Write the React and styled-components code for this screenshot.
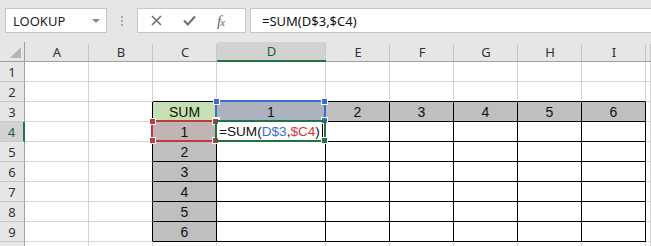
import React from "react";
import styled, { createGlobalStyle } from "styled-components";

const GlobalStyle = createGlobalStyle`
  html, body { margin: 0; padding: 0; background: #ffffff; overflow: hidden; }
  body { font-family: "Liberation Sans", Arial, sans-serif; }
`;

const Page = styled.div`
  width: 651px;
  height: 246px;
  display: flex;
  flex-direction: column;
  background: #ffffff;
  overflow: hidden;
`;

/* ---------- formula bar ---------- */

const Toolbar = styled.div`
  height: 42px;
  flex: none;
  background: #e6e6e6;
  display: flex;
  align-items: flex-start;
  padding: 8px 0 0 5px;
  box-sizing: border-box;
`;

const NameBox = styled.div`
  width: 102px;
  height: 25px;
  box-sizing: border-box;
  background: #ffffff;
  border: 1px solid #c6c6c6;
  display: flex;
  align-items: center;
  justify-content: space-between;
  padding: 0 6px 0 7px;
  font-family: "Noto Sans", "Open Sans", sans-serif;
  font-size: 13px;
  color: #222;
`;

const Caret = styled.span`
  width: 0;
  height: 0;
  border-left: 4px solid transparent;
  border-right: 4px solid transparent;
  border-top: 4px solid #888;
  margin-top: 1px;
`;

const Grip = styled.div`
  width: 30px;
  height: 25px;
  display: flex;
  flex-direction: column;
  align-items: center;
  justify-content: center;
  gap: 2px;
  span {
    width: 2px;
    height: 2px;
    background: #a8a8a8;
  }
`;

const FuncBox = styled.div`
  width: 109px;
  height: 25px;
  box-sizing: border-box;
  background: #ffffff;
  border: 1px solid #c6c6c6;
  display: flex;
  align-items: center;
  padding-left: 13px;
  gap: 21px;
`;

const Fx = styled.span`
  display: flex;
  align-items: baseline;
  font-family: "Liberation Serif", serif;
  font-style: italic;
  font-size: 15px;
  line-height: 1;
  color: #666;
  margin-top: 2px;
  small {
    font-size: 11px;
    margin-left: -1px;
  }
`;

const FormulaInput = styled.div`
  flex: 1;
  height: 25px;
  margin-left: 4px;
  box-sizing: border-box;
  background: #ffffff;
  border: 1px solid #c6c6c6;
  border-right: none;
  display: flex;
  align-items: center;
  padding-left: 11px;
  font-family: "Noto Sans", "Open Sans", sans-serif;
  font-size: 13px;
  color: #111;
`;

/* ---------- sheet ---------- */

const Sheet = styled.div`
  display: grid;
  grid-template-columns: 25px 64px 64px 64px 109px 64px 64px 64px 64px 64px 1fr;
  grid-auto-rows: 20px;
  flex: 1;
`;

const Header = styled.div`
  position: relative;
  background: ${(p) => (p.$active ? "#d2d2d2" : "#e6e6e6")};
  display: flex;
  align-items: center;
  justify-content: center;
  font-family: "Noto Sans", "Open Sans", sans-serif;
  font-size: 13px;
  color: ${(p) => (p.$active ? "#1e5c3a" : "#333")};
  box-sizing: border-box;
  border-bottom: ${(p) => (p.$active ? "2px solid #217346" : "1px solid #a0a0a0")};
  &::after {
    content: "";
    position: absolute;
    right: 0;
    top: 2px;
    bottom: 0;
    width: 1px;
    background: #c8c8c8;
  }
`;

const RowHead = styled.div`
  background: ${(p) => (p.$active ? "#d2d2d2" : "#e6e6e6")};
  display: flex;
  align-items: center;
  justify-content: center;
  font-family: "Noto Sans", "Open Sans", sans-serif;
  font-size: 13px;
  color: ${(p) => (p.$active ? "#1e5c3a" : "#333")};
  box-sizing: border-box;
  border-right: ${(p) => (p.$active ? "2px solid #217346" : "1px solid #a0a0a0")};
  border-bottom: 1px solid #c8c8c8;
`;

const Corner = styled.div`
  background: #e6e6e6;
  border-right: 1px solid #a0a0a0;
  border-bottom: 1px solid #a0a0a0;
  box-sizing: border-box;
  display: flex;
  align-items: flex-end;
  justify-content: flex-end;
  padding: 0 3px 3px 0;
`;

const Cell = styled.div`
  position: relative;
  box-sizing: border-box;
  background: ${(p) => p.$bg || "#ffffff"};
  border-right: 1px solid ${(p) => p.$rc || "#d4d4d4"};
  border-bottom: 1px solid ${(p) => p.$bc || "#d4d4d4"};
  display: flex;
  align-items: center;
  justify-content: ${(p) => (p.$left ? "flex-start" : "center")};
  padding-left: ${(p) => (p.$left ? "2px" : "0")};
  font-family: "Liberation Sans", Arial, sans-serif;
  font-size: ${(p) => (p.$left ? "13.6px" : "14px")};
  color: #111;
  white-space: nowrap;
`;

const RangeMark = styled.div`
  position: absolute;
  left: -2px;
  top: -2px;
  right: -1px;
  bottom: -1px;
  border: 2px solid ${(p) => p.$color};
  pointer-events: none;
  z-index: 2;
`;

const Handle = styled.span`
  position: absolute;
  width: 5px;
  height: 5px;
  background: ${(p) => p.$color};
  border: 1px solid #ffffff;
  ${(p) => (p.$top ? "top: -4px;" : "bottom: -4px;")}
  ${(p) => (p.$l ? "left: -4px;" : "right: -4px;")}
`;

const Blue = styled.span`
  color: #3c6fd0;
`;
const Red = styled.span`
  color: #d03a3a;
`;
const TextCaret = styled.span`
  display: inline-block;
  width: 1px;
  height: 15px;
  background: #000;
  margin-left: 2px;
`;

const cols = ["A", "B", "C", "D", "E", "F", "G", "H", "I", ""];

const Mark = ({ color, corners }) => (
  <RangeMark $color={color}>
    {corners.map(([t, l]) => (
      <Handle key={`${t}${l}`} $color={color} $top={t} $l={l} />
    ))}
  </RangeMark>
);

const allCorners = [
  [true, true],
  [true, false],
  [false, true],
  [false, false],
];

const cellValue = (r, c) => {
  if (r === 3 && c === 2) return "SUM";
  if (r === 3 && c >= 3 && c <= 8) return String(c - 2);
  if (c === 2 && r >= 4 && r <= 9) return String(r - 3);
  return "";
};

const cellStyle = (r, c) => {
  const inTable = r >= 3 && r <= 9 && c >= 2 && c <= 8;
  let bg;
  if (r === 3 && c === 2) bg = "#c6e0b4";
  else if (r === 3 && c === 3) bg = "#acb3bf";
  else if (r === 4 && c === 2) bg = "#c2b4b4";
  else if ((r === 3 && c > 3 && c <= 8) || (c === 2 && r > 4 && r <= 9)) bg = "#bfbfbf";
  const rc = inTable || (c === 1 && r >= 3 && r <= 9) ? "#000" : undefined;
  const bc = inTable || (r === 2 && c >= 2 && c <= 8) ? "#000" : undefined;
  return { bg, rc, bc };
};

const Formula = () => (
  <>
    =SUM(<Blue>D$3</Blue>,<Red>$C4</Red>)
  </>
);

export default function App() {
  const rows = [1, 2, 3, 4, 5, 6, 7, 8, 9, 10];
  return (
    <Page>
      <GlobalStyle />
      <Toolbar>
        <NameBox>
          LOOKUP
          <Caret />
        </NameBox>
        <Grip>
          <span />
          <span />
          <span />
        </Grip>
        <FuncBox>
          <svg width="11" height="11" viewBox="0 0 11 11">
            <path d="M1 1 L10 10 M10 1 L1 10" stroke="#6e6e6e" strokeWidth="1.6" fill="none" />
          </svg>
          <svg width="13" height="11" viewBox="0 0 13 11">
            <path d="M1 5.5 L4.8 9.5 L12 1.5" stroke="#6e6e6e" strokeWidth="2" fill="none" />
          </svg>
          <Fx>
            f<small>x</small>
          </Fx>
        </FuncBox>
        <FormulaInput>=SUM(D$3,$C4)</FormulaInput>
      </Toolbar>

      <Sheet>
        <Corner>
          <svg width="11" height="11" viewBox="0 0 11 11">
            <path d="M11 0 L11 11 L0 11 Z" fill="#b5b5b5" />
          </svg>
        </Corner>
        {cols.map((h, i) => (
          <Header key={i} $active={h === "D"}>
            {h}
          </Header>
        ))}
        {rows.map((r) => (
          <React.Fragment key={r}>
            <RowHead $active={r === 4}>{r < 10 ? r : ""}</RowHead>
            {cols.map((_, c) => {
              const s = cellStyle(r, c);
              const isEdit = r === 4 && c === 3;
              return (
                <Cell key={c} $bg={s.bg} $rc={s.rc} $bc={s.bc} $left={isEdit}>
                  {isEdit ? (
                    <>
                      <Formula />
                      <TextCaret />
                      <RangeMark $color="#217346">
                        <Handle $color="#217346" />
                      </RangeMark>
                    </>
                  ) : (
                    cellValue(r, c)
                  )}
                  {r === 3 && c === 3 && <Mark color="#3a6fce" corners={allCorners} />}
                  {r === 4 && c === 2 && <Mark color="#c0393b" corners={allCorners} />}
                </Cell>
              );
            })}
          </React.Fragment>
        ))}
      </Sheet>
    </Page>
  );
}
